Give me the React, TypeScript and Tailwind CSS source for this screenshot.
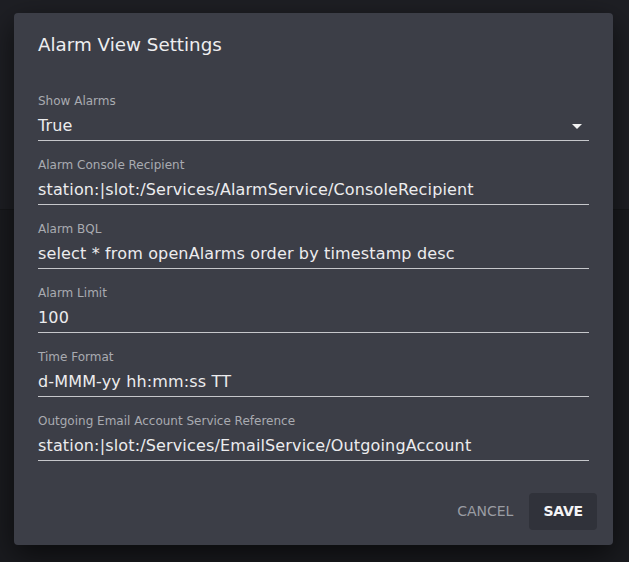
import { ReactNode } from 'react';

type FieldProps = {
    label: string;
    children: ReactNode;
};

function Field({ label, children }: FieldProps) {
    return (
        <div className="pt-[16px] pb-[2px] border-b border-[#c6c7cb]">
            <div className="text-[12px] leading-[16px] text-[#a9abb1]">{label}</div>
            <div className="mt-[5px] text-[16px] leading-[24px] tracking-[0.15px] text-[#ececee] flex items-center justify-between">
                {children}
            </div>
        </div>
    );
}

const fields = [
    { label: 'Alarm Console Recipient', value: 'station:|slot:/Services/AlarmService/ConsoleRecipient' },
    { label: 'Alarm BQL', value: 'select * from openAlarms order by timestamp desc' },
    { label: 'Alarm Limit', value: '100' },
    { label: 'Time Format', value: 'd-MMM-yy hh:mm:ss TT' },
    { label: 'Outgoing Email Account Service Reference', value: 'station:|slot:/Services/EmailService/OutgoingAccount' },
];

export default function App() {
    return (
        <div
            className="relative h-[562px] w-full overflow-hidden bg-[#1a1b1f]"
            style={{ fontFamily: '"DejaVu Sans", Verdana, sans-serif' }}
        >
            <div className="h-[210px] bg-[#1e1f24] border-b border-[#16171a]" />

            <div className="absolute left-[14px] top-[13px] w-[599px] h-[532px] rounded-[4px] bg-[#3c3e47] shadow-[0_10px_30px_rgba(0,0,0,0.6)] flex flex-col">
                <h2 className="pt-[16px] px-6 text-[18.3px] leading-[32px] text-[#eeeef0]">Alarm View Settings</h2>

                <div className="px-6 mt-[16px]">
                    <Field label="Show Alarms">
                        <span>True</span>
                        <svg width="10" height="5" viewBox="0 0 10 5" className="mr-[7px]">
                            <path d="M0 0 L10 0 L5 5 Z" fill="#f2f2f2" />
                        </svg>
                    </Field>
                    {fields.map((f) => (
                        <Field key={f.label} label={f.label}>
                            <span>{f.value}</span>
                        </Field>
                    ))}
                </div>

                <div className="mt-[32px] px-4 flex justify-end">
                    <button className="h-[37px] px-4 text-[14px] text-[#9a9ca3] uppercase">Cancel</button>
                    <button className="h-[37px] px-[14px] text-[14px] font-bold tracking-[-0.2px] text-[#f4f4f6] uppercase rounded-[4px] bg-[#30323a]">
                        Save
                    </button>
                </div>
            </div>
        </div>
    );
}
